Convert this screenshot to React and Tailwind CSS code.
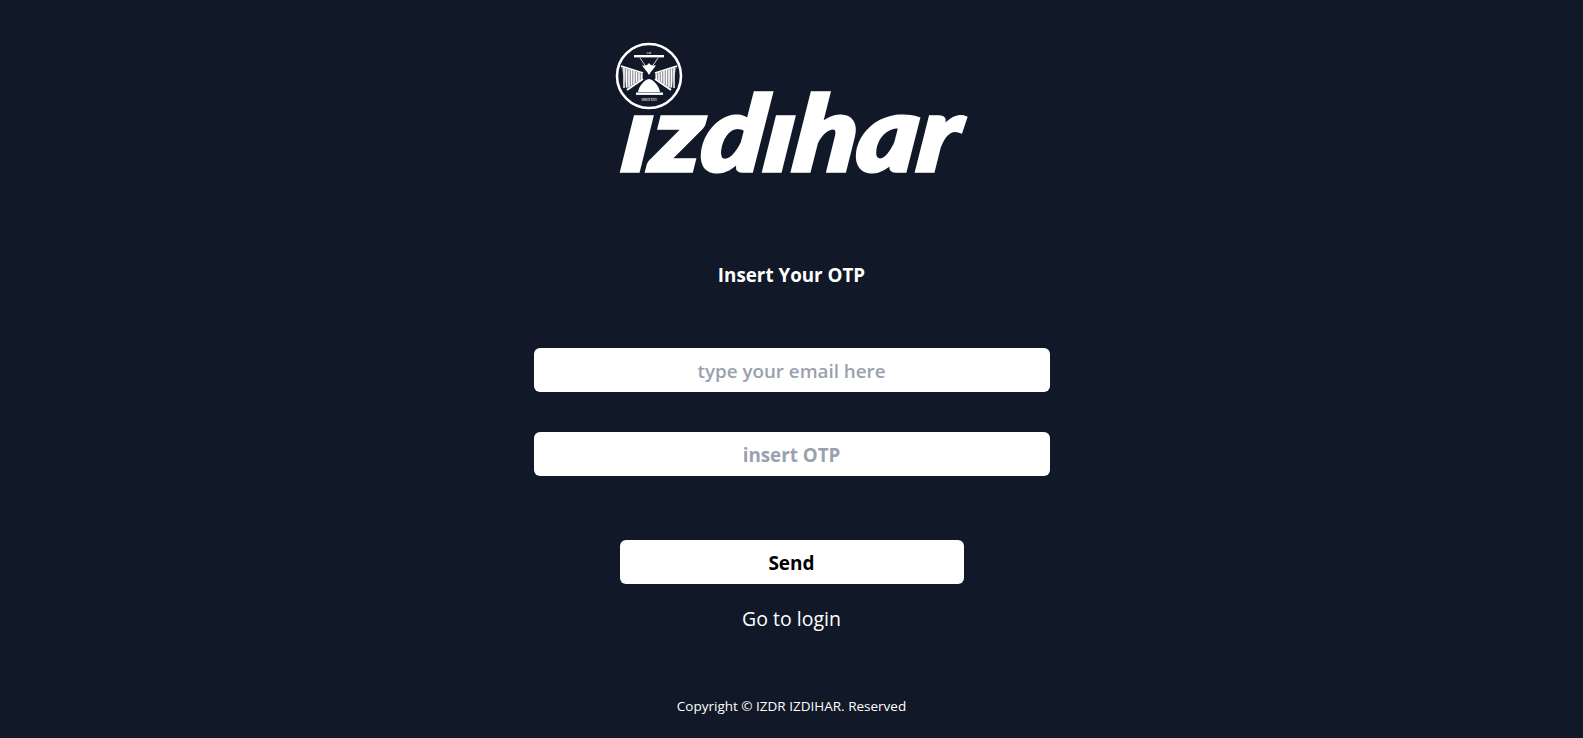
import React from "react";

function Emblem() {
  return (
    <svg viewBox="0 0 68 68" className="w-[68px] h-[68px]" fill="none">
      <circle cx="34" cy="34" r="32" stroke="white" strokeWidth="2.6" />
      <text x="34" y="11.5" textAnchor="middle" fontSize="4" fill="white" fontFamily="Liberation Serif, serif">est</text>
      <rect x="19" y="13" width="30" height="2.4" fill="white" />
      <rect x="21" y="50.5" width="27" height="2.4" fill="white" />
      <text x="34" y="58.5" textAnchor="middle" fontSize="3.6" fill="white" fontFamily="Liberation Serif, serif">MMXXIII</text>
      {/* jam */}
      <path d="M25 16 L34 29 L43 16" stroke="white" strokeWidth="0.8" />
      <path d="M34 21 C32 24 29 24 27 23 C29 27 32 29 34 33 C36 29 39 27 41 23 C39 24 36 24 34 21 Z" fill="white" />
      {/* pasir */}
      <path d="M34 37 C39 38 44 44 45 50 H23 C24 44 29 38 34 37 Z" fill="white" />
      {/* kolom kiri */}
      <path d="M6 24 L28 32 L28 36 L12 47 Z" fill="white" opacity="0.45" />
      <path d="M6 24 L28 31 M12 48 L28 37" stroke="white" strokeWidth="1.8" />
      <path d="M9 26 V46 M11.5 27 V45.5 M14 27.5 V45 M16.5 28 V43.5 M19 29 V42 M21.5 30 V40 M24 30.5 V39 M26.5 31.5 V38" stroke="white" strokeWidth="1.5" />
      {/* kolom kanan */}
      <path d="M62 24 L40 32 L40 36 L56 47 Z" fill="white" opacity="0.45" />
      <path d="M62 24 L40 31 M56 48 L40 37" stroke="white" strokeWidth="1.8" />
      <path d="M59 26 V46 M56.5 27 V45.5 M54 27.5 V45 M51.5 28 V43.5 M49 29 V42 M46.5 30 V40 M44 30.5 V39 M41.5 31.5 V38" stroke="white" strokeWidth="1.5" />
    </svg>
  );
}

function Logo() {
  return (
    <div className="relative w-[356px] h-[131px] mt-[42px]">
      <div className="absolute left-[1px] top-0">
        <Emblem />
      </div>
      <div className="absolute left-[5px] bottom-[-3px] origin-bottom-left scale-y-[0.9] -skew-x-6 font-['Lato',sans-serif] font-black italic text-white text-[116px] leading-[100px] tracking-[0px] [-webkit-text-stroke:4px_white] whitespace-nowrap">
        ızdıhar
      </div>
    </div>
  );
}

export default function App() {
  return (
    <div className="min-h-screen bg-[#111827] text-white flex flex-col items-center font-['Open_Sans','Noto_Sans',sans-serif]">
      <Logo />

      <h1 className="mt-[88px] text-[18.8px] leading-[28px] font-bold">Insert Your OTP</h1>

      <div className="mt-[59px] w-[516px] flex flex-col gap-[40px]">
        <input
          type="text"
          placeholder="type your email here"
          className="w-full h-[44px] pt-[2px] bg-white rounded-md text-center text-[18.8px] font-semibold placeholder:text-gray-400 outline-none"
        />
        <input
          type="text"
          placeholder="insert OTP"
          className="w-full h-[44px] pt-[2px] bg-white rounded-md text-center text-[18.8px] font-bold placeholder:text-gray-400 outline-none"
        />
      </div>

      <button className="mt-[64px] w-[344px] h-[44px] pt-[2px] bg-white rounded-md text-black text-[19px] font-bold">
        Send
      </button>

      <a className="mt-[21px] text-[19.5px] leading-[28px]">Go to login</a>

      <p className="mt-[63px] text-[13.5px] leading-[20px]">Copyright © IZDR IZDIHAR. Reserved</p>
    </div>
  );
}
